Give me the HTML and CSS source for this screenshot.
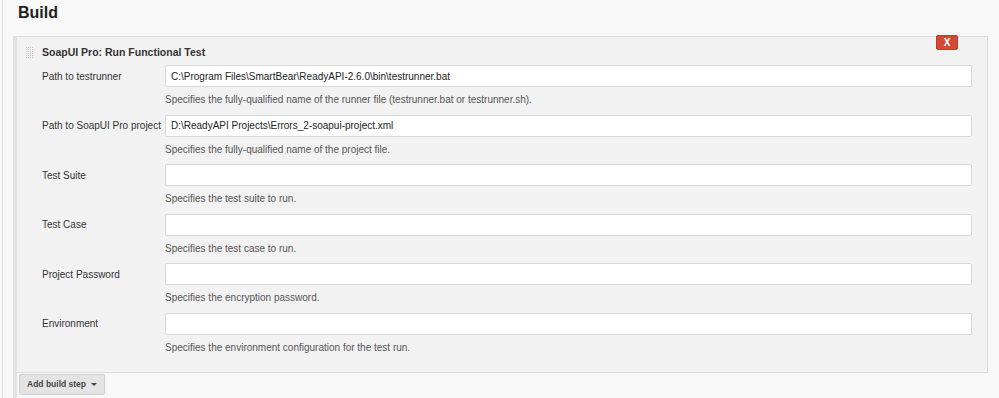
FILE: index.html
```html
<!DOCTYPE html>
<html>

<head>
    <link rel="stylesheet" href="styles.css">
</head>

<body>
    <div class="page">
        <h2 class="section-title">Build</h2>
        <div class="steps">
            <div class="step">
                <div class="step-head">
                    <span class="handle"></span>
                    <b>SoapUI Pro: Run Functional Test</b>
                    <button class="delete">X</button>
                </div>

                <div class="field">
                    <label>Path to testrunner</label>
                    <input type="text" value="C:\Program Files\SmartBear\ReadyAPI-2.6.0\bin\testrunner.bat">
                    <div class="help">Specifies the fully-qualified name of the runner file (testrunner.bat or testrunner.sh).</div>
                </div>
                <div class="field">
                    <label>Path to SoapUI Pro project</label>
                    <input type="text" value="D:\ReadyAPI Projects\Errors_2-soapui-project.xml">
                    <div class="help">Specifies the fully-qualified name of the project file.</div>
                </div>
                <div class="field">
                    <label>Test Suite</label>
                    <input type="text" value="">
                    <div class="help">Specifies the test suite to run.</div>
                </div>
                <div class="field">
                    <label>Test Case</label>
                    <input type="text" value="">
                    <div class="help">Specifies the test case to run.</div>
                </div>
                <div class="field">
                    <label>Project Password</label>
                    <input type="text" value="">
                    <div class="help">Specifies the encryption password.</div>
                </div>
                <div class="field">
                    <label>Environment</label>
                    <input type="text" value="">
                    <div class="help">Specifies the environment configuration for the test run.</div>
                </div>
            </div>
            <button class="add-step">Add build step <span class="caret"></span></button>
        </div>
    </div>
</body>

</html>
```

FILE: styles.css
```css
* {
    margin: 0;
    padding: 0;
    box-sizing: border-box;
}

body {
    background-color: #f8f8f8;
    font-family: "Liberation Sans", Arial, sans-serif;
    font-size: 10px;
    color: #333;
}

.page {
    margin-left: 2px;
    border-left: 1px solid #dedede;
    height: 398px;
    padding-left: 10px;
}

.section-title {
    font-size: 16px;
    font-weight: bold;
    color: #222;
    padding: 4px 0 0 5px;
    height: 36px;
}

.steps {
    border-left: 4px solid #e2e2e2;
    height: 362px;
}

.step {
    position: relative;
    margin-right: 11px;
    background-color: #f2f2f2;
    border: 1px solid #dcdcdc;
    border-left: none;
    padding: 7px 15px 17px 0;
}

.step-head {
    display: flex;
    align-items: center;
    height: 16px;
    padding-left: 9px;
    margin-bottom: 5px;
}

.step-head b {
    font-size: 10.5px;
    color: #333;
}

.handle {
    width: 7px;
    height: 11px;
    margin-right: 9px;
    background-image:
        linear-gradient(90deg, transparent 1px, #f2f2f2 1px),
        linear-gradient(#c4c4c4 1px, transparent 1px);
    background-size: 2px 2px;
}

.delete {
    position: absolute;
    top: -2px;
    right: 29px;
    width: 22px;
    height: 15px;
    background-color: #d24a35;
    border: 1px solid #c23a26;
    border-radius: 2px;
    color: #fff;
    font-family: "Liberation Sans", Arial, sans-serif;
    font-size: 10px;
    font-weight: bold;
    line-height: 13px;
}

.field {
    display: grid;
    grid-template-columns: 148px 1fr;
    row-gap: 6px;
    padding-bottom: 7.5px;
}

.field:last-child {
    padding-bottom: 0;
}

.field label {
    padding-left: 25px;
    align-self: center;
    white-space: nowrap;
    color: #333;
}

.field input {
    height: 22px;
    background-color: #fff;
    border: 1px solid #d8d8d8;
    border-radius: 2px;
    padding: 0 5px;
    font-family: "Liberation Sans", Arial, sans-serif;
    font-size: 10px;
    color: #222;
}

.help {
    grid-column: 2;
    line-height: 14px;
    color: #555;
}

.add-step {
    margin: 1px 0 0 2px;
    height: 21px;
    padding: 0 7px 0 7px;
    background-color: #e4e4e4;
    border: 1px solid #cfcfcf;
    border-radius: 2px;
    font-family: "Liberation Sans", Arial, sans-serif;
    font-size: 8.5px;
    font-weight: bold;
    color: #444;
}

.caret {
    display: inline-block;
    margin-left: 3px;
    vertical-align: middle;
    border-left: 3px solid transparent;
    border-right: 3px solid transparent;
    border-top: 3px solid #444;
}
```
